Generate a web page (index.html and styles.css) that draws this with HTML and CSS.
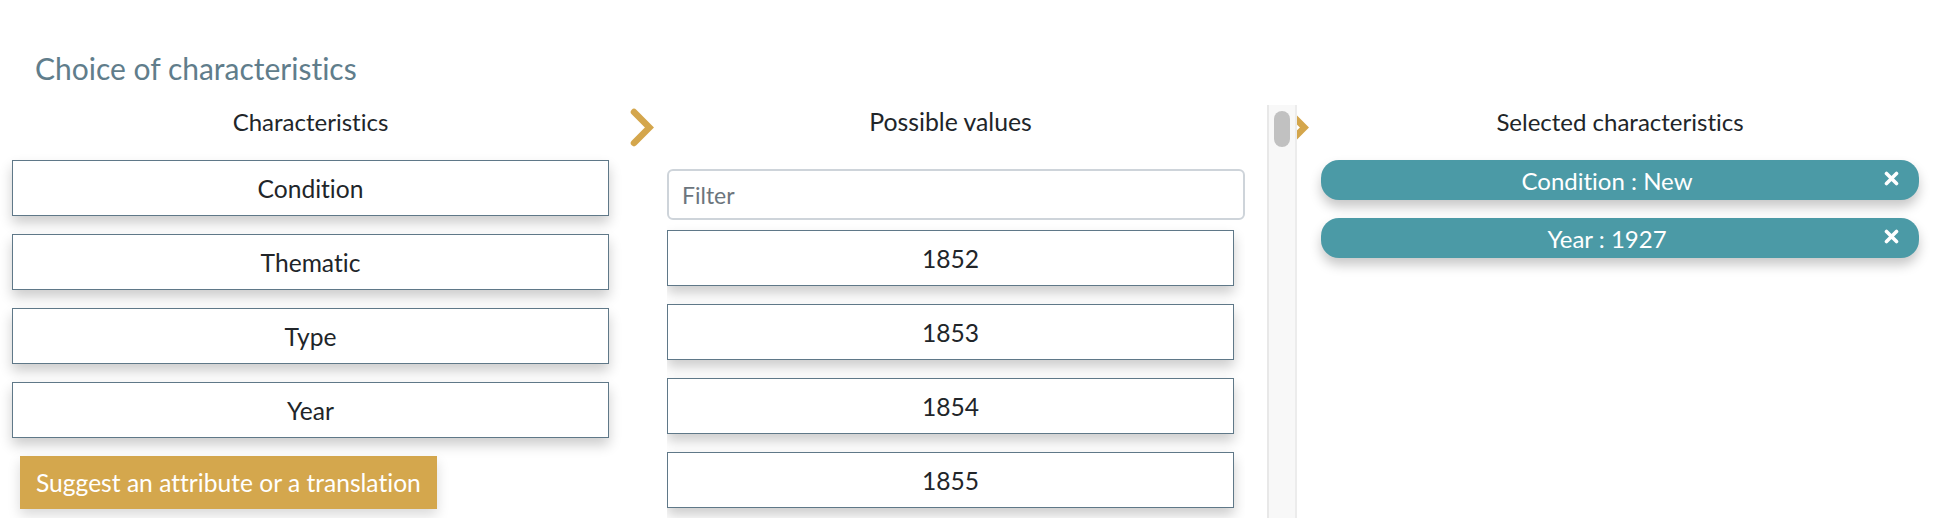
FILE: index.html
```html
<!DOCTYPE html>
<html lang="en">
<head>
<meta charset="utf-8">
<title>Choice of characteristics</title>
<link rel="stylesheet" href="styles.css">
</head>
<body>
<div class="page">
  <h2 class="title">Choice of characteristics</h2>
  <div class="board">
    <section class="col col-left">
      <div class="col-head">Characteristics</div>
      <div class="list">
        <div class="item">Condition</div>
        <div class="item">Thematic</div>
        <div class="item">Type</div>
        <div class="item">Year</div>
      </div>
      <button class="suggest" type="button">Suggest an attribute or a translation</button>
    </section>

    <div class="arrow arrow-1">
      <svg width="24" height="39" viewBox="0 0 24 39"><path d="M4 4 L19.4 19.5 L4 35" fill="none" stroke="#d4a64c" stroke-width="6.5" stroke-linecap="round" stroke-linejoin="miter"/></svg>
    </div>

    <section class="col-mid">
      <div class="mid-scroll">
        <div class="col-head col-head-mid">Possible values</div>
        <input class="filter" type="text" placeholder="Filter">
        <div class="list values">
          <div class="item">1852</div>
          <div class="item">1853</div>
          <div class="item">1854</div>
          <div class="item">1855</div>
        </div>
      </div>
      <div class="scrollbar"><div class="thumb"></div></div>
    </section>

    <div class="arrow arrow-2">
      <svg width="24" height="39" viewBox="0 0 24 39"><path d="M4 4 L19.4 19.5 L4 35" fill="none" stroke="#d4a64c" stroke-width="6.5" stroke-linecap="round" stroke-linejoin="miter"/></svg>
    </div>

    <section class="col col-right">
      <div class="col-head">Selected characteristics</div>
      <div class="pills">
        <div class="pill"><span>Condition : New</span><svg class="x" width="15" height="15" viewBox="0 0 15 15"><path d="M2.5 2.5 L12.5 12.5 M12.5 2.5 L2.5 12.5" stroke="#fff" stroke-width="3.6" stroke-linecap="round"/></svg></div>
        <div class="pill"><span>Year : 1927</span><svg class="x" width="15" height="15" viewBox="0 0 15 15"><path d="M2.5 2.5 L12.5 12.5 M12.5 2.5 L2.5 12.5" stroke="#fff" stroke-width="3.6" stroke-linecap="round"/></svg></div>
      </div>
    </section>
  </div>
</div>
</body>
</html>
```

FILE: styles.css
```css
html, body {
  margin: 0;
  height: 518px;
  overflow: hidden;
  background: #fff;
}

body {
  font-family: Lato, "Noto Sans", sans-serif;
  font-variant-ligatures: none;
  color: #212529;
}

.page {
  padding: 0 21px 0 12px;
}

.title {
  margin: 0;
  padding: 50px 0 0 23px;
  font-size: 30px;
  font-weight: 400;
  line-height: 36px;
  color: #607d8b;
}

.board {
  display: flex;
  align-items: flex-start;
  margin-top: 19px;
}

.col-left {
  flex: none;
  width: 597px;
}

.col-right {
  flex: none;
  width: 598px;
}

.col-head {
  height: 55px;
  box-sizing: border-box;
  padding-top: 2px;
  font-size: 24px;
  line-height: 29px;
  text-align: center;
}

.col-head-mid {
  height: 64px;
  width: 567px;
  font-size: 24.8px;
}

.list {
  display: flex;
  flex-direction: column;
  gap: 18px;
}

.item {
  height: 56px;
  box-sizing: border-box;
  border: 1px solid #5f7888;
  background: #fff;
  display: flex;
  align-items: center;
  justify-content: center;
  font-size: 24.6px;
  box-shadow: 0 7px 12px rgba(0, 0, 0, 0.2);
}

.suggest {
  display: block;
  margin: 18px 0 0 8px;
  height: 53px;
  padding: 0 16px;
  border: 0;
  background: #d4a74d;
  color: #fff;
  font-family: inherit;
  font-variant-ligatures: none;
  font-size: 24.6px;
  box-shadow: 0 6px 12px rgba(0, 0, 0, 0.15);
}

.arrow svg {
  display: block;
}

.arrow-1 {
  flex: none;
  width: 58px;
  box-sizing: border-box;
  padding: 3px 0 0 21px;
}

.arrow-2 {
  flex: none;
  width: 24px;
  padding-top: 3px;
}

.arrow-2 svg {
  margin-left: -12px;
}

.col-mid {
  flex: none;
  width: 630px;
  height: 440px;
  display: flex;
}

.mid-scroll {
  width: 578px;
  margin-right: 22px;
  overflow: hidden;
}

.filter {
  display: block;
  width: 578px;
  height: 51px;
  box-sizing: border-box;
  margin: 0;
  border: 2px solid #ced4da;
  border-radius: 6px;
  padding: 0 13px;
  font-family: inherit;
  font-size: 23px;
  color: #495057;
  background: #fff;
}

.filter::placeholder {
  color: #6c757d;
}

.values {
  margin-top: 10px;
  width: 567px;
}

.scrollbar {
  position: relative;
  z-index: 1;
  width: 30px;
  box-sizing: border-box;
  border-left: 2px solid #e8e8e8;
  border-right: 2px solid #ececec;
  background: #f8f8f8;
  padding: 6px 5px;
}

.thumb {
  height: 36px;
  border-radius: 8px;
  background: #c1c1c1;
}

.pills {
  display: flex;
  flex-direction: column;
  gap: 18px;
}

.pill {
  position: relative;
  height: 40px;
  box-sizing: border-box;
  border-radius: 18px;
  background: #4b9aa6;
  color: #fff;
  font-size: 24px;
  display: flex;
  align-items: center;
  justify-content: center;
  padding: 0 42px 0 16px;
  box-shadow: 0 7px 12px rgba(0, 0, 0, 0.22);
}

.pill .x {
  position: absolute;
  right: 20px;
  top: 11px;
}
```
